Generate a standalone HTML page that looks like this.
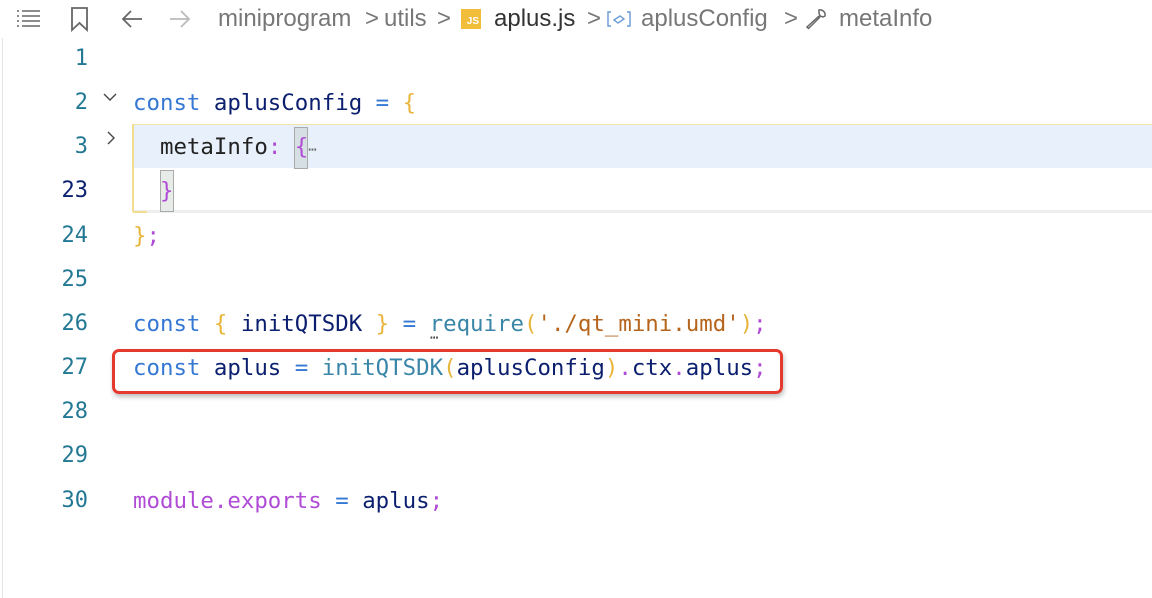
<!DOCTYPE html>
<html><head><meta charset="utf-8"><style>
*{margin:0;padding:0;box-sizing:border-box}
body{width:1152px;height:598px;background:#fff;position:relative;overflow:hidden;font-family:"DejaVu Sans Mono","Liberation Mono",monospace}
.bc{position:absolute;top:0;left:0;height:38px;width:1152px;font-family:"Liberation Sans",sans-serif;font-size:24px;color:#777;}
.bc span{position:absolute;top:5px;white-space:nowrap}
.leftline{position:absolute;left:2px;top:38px;width:1px;height:560px;background:#e4e4e4}
.ln{position:absolute;left:20px;width:68px;text-align:right;font-size:22px;color:#237893;height:44px;line-height:46px}
.code{position:absolute;left:133px;font-size:22.4px;height:44px;line-height:46px;white-space:pre;color:#001080}
.k{color:#3478d4}.y{color:#e8b53a}.p{color:#b04bd6}.f{color:#3a86a8}.s{color:#b5651d}.n{color:#0b1f6e}.o{color:#3478d4}
</style></head><body>
<div class="bc">
<svg style="position:absolute;left:16px;top:9px" width="26" height="20" viewBox="0 0 26 20" fill="none" stroke="#666" stroke-width="1.6"><path d="M1 2h2M1 7h2M1 12h2M1 17h2M6 2h18M6 7h18M6 12h18M6 17h18"/></svg>
<svg style="position:absolute;left:70px;top:6px" width="20" height="26" viewBox="0 0 20 26" fill="none" stroke="#666" stroke-width="1.8"><path d="M2 2h15v22l-7.5-7L2 24z"/></svg>
<svg style="position:absolute;left:120px;top:9px" width="24" height="20" viewBox="0 0 24 20" fill="none" stroke="#666" stroke-width="1.8"><path d="M22 10H3M11 2L3 10l8 8"/></svg>
<svg style="position:absolute;left:168px;top:9px" width="24" height="20" viewBox="0 0 24 20" fill="none" stroke="#bbb" stroke-width="1.8"><path d="M2 10h19M13 2l8 8-8 8"/></svg>
<span style="left:218px">miniprogram</span>
<span style="left:365px">&gt;</span>
<span style="left:384px">utils</span>
<span style="left:437px">&gt;</span>
<div style="position:absolute;left:461px;top:9px;width:20px;height:20px;background:#f3bd3c;color:#fff;font-size:10px;font-weight:bold;text-align:right;padding:7px 2px 0 0;line-height:12px;font-family:'Liberation Sans',sans-serif">JS</div>
<span style="left:494px;color:#333">aplus.js</span>
<span style="left:587px">&gt;</span>
<svg style="position:absolute;left:607px;top:10px" width="24" height="18" viewBox="0 0 24 18" fill="none" stroke="#6a9ad6" stroke-width="1.4"><path d="M4 2H1v14h3M20 2h3v14h-3M7 10l6-4 4 3-6 4z"/></svg>
<span style="left:641px">aplusConfig</span>
<span style="left:784px">&gt;</span>
<svg style="position:absolute;left:804px;top:7px" width="24" height="24" viewBox="0 0 24 24" fill="none" stroke="#666" stroke-width="1.5"><path d="M15 3a5 5 0 0 1 6 6l-2 1-3-1-1-3zM15 9L3 20l1.5 1.5L16 10"/></svg>
<span style="left:839px">metaInfo</span>
</div>
<div class="leftline"></div>
<div style="position:absolute;left:133px;top:124px;width:1019px;height:44px;background:#e8f0fb;border-top:1px solid #f3e3a0"></div>
<div style="position:absolute;left:133px;top:168px;width:1019px;height:45px;border-bottom:3px solid #eee"></div>
<div style="position:absolute;left:132px;top:124px;width:2px;height:88px;background:#f0dd90"></div>
<div style="position:absolute;left:133px;top:211px;width:14px;height:2px;background:#f0dd90"></div>
<div style="position:absolute;left:294px;top:127px;width:14px;height:42px;background:#d6e0e4;border:1px solid #aaa"></div>
<div style="position:absolute;left:160px;top:170px;width:14px;height:42px;background:#e8ece8;border:1px solid #aaa"></div>
<svg style="position:absolute;left:102px;top:92px" width="16" height="10" viewBox="0 0 16 10" fill="none" stroke="#444" stroke-width="1.4"><path d="M2 2l6 6 6-6"/></svg>
<svg style="position:absolute;left:106px;top:130px" width="10" height="16" viewBox="0 0 10 16" fill="none" stroke="#444" stroke-width="1.4"><path d="M2 2l6 6-6 6"/></svg>

<div class="ln" style="top:36px">1</div>
<div class="ln" style="top:80px">2</div>
<div class="ln" style="top:124px">3</div>
<div class="ln" style="top:168px;color:#0b216f">23</div>
<div class="ln" style="top:213px">24</div>
<div class="ln" style="top:257px">25</div>
<div class="ln" style="top:301px">26</div>
<div class="ln" style="top:345px">27</div>
<div class="ln" style="top:389px">28</div>
<div class="ln" style="top:433px">29</div>
<div class="ln" style="top:478px">30</div>

<div class="code" style="top:80px"><span class="k">const</span> <span class="n">aplusConfig</span> <span class="o">=</span> <span class="y">{</span></div>
<div class="code" style="top:124px;color:#222">  metaInfo<span class="p">:</span> <span class="p">{</span><span style="color:#666;font-size:14px">⋯</span></div>
<div class="code" style="top:168px">  <span class="p">}</span></div>
<div class="code" style="top:213px"><span class="y">}</span><span class="p">;</span></div>
<div class="code" style="top:301px"><span class="k">const</span> <span class="y">{</span> <span class="n">initQTSDK</span> <span class="y">}</span> <span class="o">=</span> <span class="f">require</span><span class="y">(</span><span class="s">'./qt_mini.umd'</span><span class="y">)</span><span class="p">;</span></div>
<div style="position:absolute;left:430px;top:330px;font-size:14px;color:#444">⋯</div>
<div class="code" style="top:345px"><span class="k">const</span> <span class="n">aplus</span> <span class="o">=</span> <span class="f">initQTSDK</span><span class="y">(</span><span class="n">aplusConfig</span><span class="y">)</span><span class="p">.</span><span class="n">ctx</span><span class="p">.</span><span class="n">aplus</span><span class="p">;</span></div>
<div class="code" style="top:478px"><span class="p">module.exports</span> <span class="o">=</span> <span class="n">aplus</span><span class="p">;</span></div>
<div style="position:absolute;left:112px;top:349px;width:671px;height:45px;border:3px solid #e5392d;border-radius:7px;box-shadow:1px 3px 5px rgba(0,0,0,0.25)"></div>
</body></html>
